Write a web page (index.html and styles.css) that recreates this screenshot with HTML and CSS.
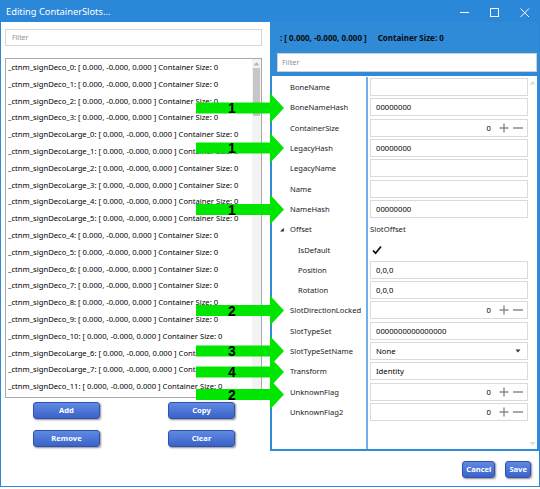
FILE: index.html
```html
<!DOCTYPE html>
<html>
<head>
<meta charset="utf-8">
<link rel="stylesheet" href="styles.css">
</head>
<body>
<div class="window">
  <div class="titlebar">
    <span class="title">Editing ContainerSlots...</span>
    <div class="controls">
      <svg class="ctl" width="30" height="22" viewBox="0 0 30 22"><line x1="10" y1="12.5" x2="19" y2="12.5" stroke="#fff" stroke-width="1"/></svg>
      <svg class="ctl" width="30" height="22" viewBox="0 0 30 22"><rect x="10.5" y="8.5" width="8" height="8" fill="none" stroke="#fff" stroke-width="1"/></svg>
      <svg class="ctl" width="30" height="22" viewBox="0 0 30 22"><path d="M10.5 8.5 L19 17 M19 8.5 L10.5 17" stroke="#fff" stroke-width="1"/></svg>
    </div>
  </div>
  <div class="body">
    <div class="left">
      <div class="filter">Filter</div>
      <div class="listbox">
        <div class="items">
          <div class="item">_ctnm_signDeco_0: [ 0.000, -0.000, 0.000 ] Container Size: 0</div>
          <div class="item">_ctnm_signDeco_1: [ 0.000, -0.000, 0.000 ] Container Size: 0</div>
          <div class="item">_ctnm_signDeco_2: [ 0.000, -0.000, 0.000 ] Container Size: 0</div>
          <div class="item">_ctnm_signDeco_3: [ 0.000, -0.000, 0.000 ] Container Size: 0</div>
          <div class="item">_ctnm_signDecoLarge_0: [ 0.000, -0.000, 0.000 ] Container Size: 0</div>
          <div class="item">_ctnm_signDecoLarge_1: [ 0.000, -0.000, 0.000 ] Container Size: 0</div>
          <div class="item">_ctnm_signDecoLarge_2: [ 0.000, -0.000, 0.000 ] Container Size: 0</div>
          <div class="item">_ctnm_signDecoLarge_3: [ 0.000, -0.000, 0.000 ] Container Size: 0</div>
          <div class="item">_ctnm_signDecoLarge_4: [ 0.000, -0.000, 0.000 ] Container Size: 0</div>
          <div class="item">_ctnm_signDecoLarge_5: [ 0.000, -0.000, 0.000 ] Container Size: 0</div>
          <div class="item">_ctnm_signDeco_4: [ 0.000, -0.000, 0.000 ] Container Size: 0</div>
          <div class="item">_ctnm_signDeco_5: [ 0.000, -0.000, 0.000 ] Container Size: 0</div>
          <div class="item">_ctnm_signDeco_6: [ 0.000, -0.000, 0.000 ] Container Size: 0</div>
          <div class="item">_ctnm_signDeco_7: [ 0.000, -0.000, 0.000 ] Container Size: 0</div>
          <div class="item">_ctnm_signDeco_8: [ 0.000, -0.000, 0.000 ] Container Size: 0</div>
          <div class="item">_ctnm_signDeco_9: [ 0.000, -0.000, 0.000 ] Container Size: 0</div>
          <div class="item">_ctnm_signDeco_10: [ 0.000, -0.000, 0.000 ] Container Size: 0</div>
          <div class="item">_ctnm_signDecoLarge_6: [ 0.000, -0.000, 0.000 ] Container Size: 0</div>
          <div class="item">_ctnm_signDecoLarge_7: [ 0.000, -0.000, 0.000 ] Container Size: 0</div>
          <div class="item">_ctnm_signDeco_11: [ 0.000, -0.000, 0.000 ] Container Size: 0</div>
        </div>
        <div class="vscroll">
          <svg class="arr" width="9" height="9" viewBox="0 0 9 9"><path d="M1.5 6.5 L4.5 3 L7.5 6.5 Z" fill="#b8b8b8"/></svg>
          <div class="thumb"></div>
          <div class="track"></div>
          <svg class="arr" width="9" height="9" viewBox="0 0 9 9"><path d="M1.5 3 L4.5 6.5 L7.5 3 Z" fill="#b8b8b8"/></svg>
        </div>
      </div>
      <div class="btns">
        <div class="btn">Add</div>
        <div class="btn">Copy</div>
        <div class="btn">Remove</div>
        <div class="btn">Clear</div>
      </div>
    </div>
    <div class="right">
      <div class="panel">
        <div class="phead">
          <div class="ptitle"><span>: [ 0.000, -0.000, 0.000 ]</span><span class="csize">Container Size: 0</span></div>
          <div class="pfilter">Filter</div>
        </div>
        <div class="pbody">
          <div class="grid">
            <div class="row"><div class="lab">BoneName</div><div class="val"><div class="box"></div></div></div>
            <div class="row"><div class="lab">BoneNameHash</div><div class="val"><div class="box">00000000</div></div></div>
            <div class="row"><div class="lab">ContainerSize</div><div class="val"><div class="box num"><span class="n">0</span><svg class="pm" width="24" height="10" viewBox="0 0 24 10"><path d="M5 0.5 V9.5 M0.5 5 H9.5 M14 5 H24" stroke="#8c8c8c" stroke-width="1.4" fill="none"/></svg></div></div></div>
            <div class="row"><div class="lab">LegacyHash</div><div class="val"><div class="box">00000000</div></div></div>
            <div class="row"><div class="lab">LegacyName</div><div class="val"><div class="box"></div></div></div>
            <div class="row"><div class="lab">Name</div><div class="val"><div class="box"></div></div></div>
            <div class="row"><div class="lab">NameHash</div><div class="val"><div class="box">00000000</div></div></div>
            <div class="row"><div class="lab"><span class="tri">&#9698;</span>Offset</div><div class="val"><div class="plain">SlotOffset</div></div></div>
            <div class="row"><div class="lab sub">IsDefault</div><div class="val"><svg class="check" width="12" height="12" viewBox="0 0 12 12"><path d="M2 6.5 L4.6 9.2 L10 2.5" fill="none" stroke="#111" stroke-width="1.8"/></svg></div></div>
            <div class="row"><div class="lab sub">Position</div><div class="val"><div class="box">0,0,0</div></div></div>
            <div class="row"><div class="lab sub">Rotation</div><div class="val"><div class="box">0,0,0</div></div></div>
            <div class="row"><div class="lab">SlotDirectionLocked</div><div class="val"><div class="box num"><span class="n">0</span><svg class="pm" width="24" height="10" viewBox="0 0 24 10"><path d="M5 0.5 V9.5 M0.5 5 H9.5 M14 5 H24" stroke="#8c8c8c" stroke-width="1.4" fill="none"/></svg></div></div></div>
            <div class="row"><div class="lab">SlotTypeSet</div><div class="val"><div class="box">0000000000000000</div></div></div>
            <div class="row"><div class="lab">SlotTypeSetName</div><div class="val"><div class="box combo"><span>None</span><svg width="6" height="4" viewBox="0 0 6 4"><path d="M0.5 0.5 L3 3.5 L5.5 0.5 Z" fill="#333"/></svg></div></div></div>
            <div class="row"><div class="lab">Transform</div><div class="val"><div class="box">Identity</div></div></div>
            <div class="row"><div class="lab">UnknownFlag</div><div class="val"><div class="box num"><span class="n">0</span><svg class="pm" width="24" height="10" viewBox="0 0 24 10"><path d="M5 0.5 V9.5 M0.5 5 H9.5 M14 5 H24" stroke="#8c8c8c" stroke-width="1.4" fill="none"/></svg></div></div></div>
            <div class="row"><div class="lab">UnknownFlag2</div><div class="val"><div class="box num"><span class="n">0</span><svg class="pm" width="24" height="10" viewBox="0 0 24 10"><path d="M5 0.5 V9.5 M0.5 5 H9.5 M14 5 H24" stroke="#8c8c8c" stroke-width="1.4" fill="none"/></svg></div></div></div>
          </div>
          <div class="pscroll">
            <svg width="9" height="9" viewBox="0 0 9 9"><path d="M1.5 6.5 L4.5 3 L7.5 6.5 Z" fill="#dcdcdc"/></svg>
            <svg width="9" height="9" viewBox="0 0 9 9"><path d="M1.5 3 L4.5 6.5 L7.5 3 Z" fill="#dcdcdc"/></svg>
          </div>
        </div>
      </div>
      <div class="footer">
        <div class="btn small">Cancel</div>
        <div class="btn small">Save</div>
      </div>
    </div>
  </div>
  <svg class="arrows" width="540" height="489" viewBox="0 0 540 489">
    <g fill="#00e600">
      <polygon points="196,102.5 270,102.5 270,93 284,108 270,123 270,113.5 196,113.5"/>
      <polygon points="196,142.5 270,142.5 270,133 284,148 270,163 270,153.5 196,153.5"/>
      <polygon points="196,204 270,204 270,194.5 284,209.5 270,224.5 270,215 196,215"/>
      <polygon points="196,305 270,305 270,295.5 284,310.5 270,325.5 270,316 196,316"/>
      <polygon points="196,345.5 270,345.5 270,336 284,351 270,366 270,356.5 196,356.5"/>
      <polygon points="196,366.5 270,366.5 270,357 284,372 270,387 270,377.5 196,377.5"/>
      <polygon points="196,389 270,389 270,379.5 284,394.5 270,409.5 270,400 196,400"/>
    </g>
    <g class="nums">
      <text x="232" y="113">1</text>
      <text x="232" y="153">1</text>
      <text x="232" y="214.5">1</text>
      <text x="232" y="315.5">2</text>
      <text x="232" y="356">3</text>
      <text x="232" y="377">4</text>
      <text x="232" y="399.5">2</text>
    </g>
  </svg>
</div>
</body>
</html>
```
FILE: styles.css
```css
* { box-sizing: border-box; }
html, body { margin: 0; padding: 0; background: #fff; }
body { width: 540px; height: 489px; overflow: hidden; font-family: "Noto Sans", "Open Sans", sans-serif; }

.window {
  position: relative;
  width: 540px;
  height: 487px;
  border: 1px solid #2b88d8;
  border-top: none;
  display: flex;
  flex-direction: column;
}

.titlebar {
  height: 22px;
  margin: 0 -1px;
  background: #2b88d8;
  display: flex;
  align-items: center;
  justify-content: space-between;
  color: #fff;
}
.title { font-size: 9.3px; padding-left: 6px; }
.controls { display: flex; }
.ctl { display: block; }

.body { flex: 1; display: flex; padding-left: 4px; gap: 8px; }

.left { width: 257px; display: flex; flex-direction: column; }
.filter {
  margin-top: 7px;
  height: 17px;
  border: 1px solid #d6d6d6;
  font-size: 6.9px;
  color: #8f8f8f;
  padding-left: 6px;
  line-height: 15px;
}
.listbox {
  margin-top: 12px;
  height: 340px;
  border: 1px solid #a9a9a9;
  display: flex;
  overflow: hidden;
}
.items { flex: 1; overflow: hidden; padding-left: 2px; }
.item {
  height: 16.8px;
  line-height: 16.8px;
  font-size: 7.65px;
  color: #000;
  white-space: nowrap;
}
.vscroll {
  width: 9px;
  background: #f3f3f3;
  display: flex;
  flex-direction: column;
  align-items: center;
}
.arr { display: block; flex: none; }
.thumb { width: 7px; height: 48px; background: #c6c6c6; flex: none; }
.track { flex: 1; }

.btns {
  margin-top: 4px;
  display: grid;
  grid-template-columns: 67px 67px;
  column-gap: 68px;
  row-gap: 11px;
  padding-left: 28px;
}
.btn {
  height: 17px;
  border: 1px solid #2f52ad;
  border-radius: 3px;
  background: linear-gradient(#6089e3, #3a62c9);
  box-shadow: 1px 1px 2px rgba(0,0,0,0.45);
  color: #fff;
  font-family: "Noto Sans", sans-serif;
  font-weight: bold;
  font-size: 7.6px;
  line-height: 15px;
  text-align: center;
}

.right { width: 269px; display: flex; flex-direction: column; }
.panel {
  height: 429px;
  border: 2px solid #2f8ad8;
  border-top: none;
  display: flex;
  flex-direction: column;
}
.phead {
  height: 54px;
  background: #2f8ad8;
  margin: 0 -2px;
  padding: 8px 2px 4px 7px;
}
.ptitle {
  font-family: "Noto Sans", sans-serif;
  font-weight: bold;
  font-size: 8px;
  color: #0a0a0a;
  height: 16px;
  line-height: 16px;
  padding-left: 3px;
}
.csize { margin-left: 11px; }
.pfilter {
  margin-top: 7px;
  height: 19px;
  background: #fff;
  border: 1px solid #d0d0d0;
  font-size: 7.4px;
  color: #8f8f8f;
  line-height: 17px;
  padding-left: 4px;
}
.pbody { flex: 1; display: flex; padding-top: 1px; }
.grid {
  flex: 1;
  background: linear-gradient(to right, transparent 94px, #6fb0ea 94px, #6fb0ea 96px, transparent 96px);
}
.row { height: 20.3px; display: flex; align-items: center; }
.lab {
  width: 96px;
  padding-left: 18px;
  font-size: 7.6px;
  color: #1a1a1a;
  white-space: nowrap;
  display: flex;
  align-items: center;
}
.lab.sub { padding-left: 26px; }
.tri { font-size: 5px; margin-left: -10px; width: 10px; color: #333; }
.val { flex: 1; padding-left: 2px; height: 100%; display: flex; align-items: center; }
.box {
  width: 100%;
  height: 18px;
  border: 1px solid #dadada;
  font-size: 7.7px;
  color: #000;
  padding-left: 5px;
  line-height: 16px;
  display: flex;
  align-items: center;
}
.box.num { justify-content: flex-end; padding-right: 4px; }
.n { margin-right: 8px; }
.pm { display: block; }
.box.combo { justify-content: space-between; padding-right: 6px; }
.box.combo svg { display: block; }
.plain { font-size: 7.7px; color: #1a1a1a; }
.check { display: block; margin-left: 1px; }
.pscroll {
  width: 9px;
  display: flex;
  flex-direction: column;
  justify-content: space-between;
  padding: 1px 0 1px 0;
}
.pscroll svg { display: block; }

.footer {
  flex: 1;
  display: flex;
  justify-content: flex-end;
  gap: 10px;
  padding: 10px 8px 0 0;
}
.btn.small { padding: 0 3px; }

.arrows { position: absolute; left: -1px; top: 0; pointer-events: none; }
.nums text {
  font-family: "Liberation Sans", Arial, sans-serif;
  font-weight: bold;
  font-size: 14px;
  text-anchor: middle;
  fill: #000;
}
```
